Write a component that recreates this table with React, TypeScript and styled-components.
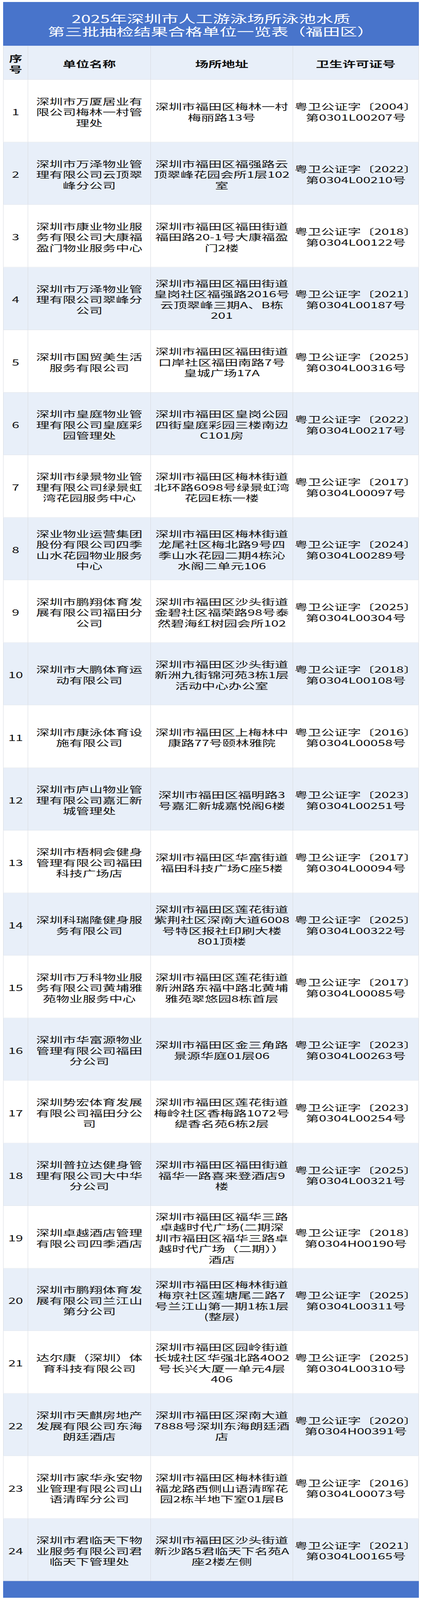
import React, { useEffect, useState } from "react";
import styled, { createGlobalStyle } from "styled-components";

const PAGE_W = 1080;
const PAGE_H = 6423;

const GlobalStyle = createGlobalStyle`
  html, body {
    margin: 0;
    padding: 0;
    background: #ffffff;
  }
  body {
    font-family: "Noto Sans CJK SC", "Noto Sans", "Liberation Sans", sans-serif;
    color: #111111;
  }
  * { box-sizing: border-box; }
`;

const BLUE = "#4874cb";
const LIGHT = "#e8eff9";
const LINE = "#d8dbe0";

type RowData = {
  name: string[];
  addr: string[];
  year: string;
  no: string;
};

const rows: RowData[] = [
  { name: ["深圳市万厦居业有", "限公司梅林一村管", "理处"], addr: ["深圳市福田区梅林一村", "梅丽路13号"], year: "2004", no: "第0301L00207号" },
  { name: ["深圳市万泽物业管", "理有限公司云顶翠", "峰分公司"], addr: ["深圳市福田区福强路云", "顶翠峰花园会所1层102", "室"], year: "2022", no: "第0304L00210号" },
  { name: ["深圳市康业物业服", "务有限公司大康福", "盈门物业服务中心"], addr: ["深圳市福田区福田街道", "福田路20-1号大康福盈", "门2楼"], year: "2018", no: "第0304L00122号" },
  { name: ["深圳市万泽物业管", "理有限公司翠峰分", "公司"], addr: ["深圳市福田区福田街道", "皇岗社区福强路2016号", "云顶翠峰三期A、B栋", "201"], year: "2021", no: "第0304L00187号" },
  { name: ["深圳市国贸美生活", "服务有限公司"], addr: ["深圳市福田区福田街道", "口岸社区福田南路7号", "皇城广场17A"], year: "2025", no: "第0304L00316号" },
  { name: ["深圳市皇庭物业管", "理有限公司皇庭彩", "园管理处"], addr: ["深圳市福田区皇岗公园", "四街皇庭彩园三楼南边", "C101房"], year: "2022", no: "第0304L00217号" },
  { name: ["深圳市绿景物业管", "理有限公司绿景虹", "湾花园服务中心"], addr: ["深圳市福田区梅林街道", "北环路6098号绿景虹湾", "花园E栋一楼"], year: "2017", no: "第0304L00097号" },
  { name: ["深业物业运营集团", "股份有限公司四季", "山水花园物业服务", "中心"], addr: ["深圳市福田区梅林街道", "龙尾社区梅北路9号四", "季山水花园二期4栋沁", "水阁二单元106"], year: "2024", no: "第0304L00289号" },
  { name: ["深圳市鹏翔体育发", "展有限公司福田分", "公司"], addr: ["深圳市福田区沙头街道", "金碧社区福荣路98号泰", "然碧海红树园会所102"], year: "2025", no: "第0304L00304号" },
  { name: ["深圳市大鹏体育运", "动有限公司"], addr: ["深圳市福田区沙头街道", "新洲九街锦河苑3栋1层", "活动中心办公室"], year: "2018", no: "第0304L00108号" },
  { name: ["深圳市康泳体育设", "施有限公司"], addr: ["深圳市福田区上梅林中", "康路77号颐林雅院"], year: "2016", no: "第0304L00058号" },
  { name: ["深圳市庐山物业管", "理有限公司嘉汇新", "城管理处"], addr: ["深圳市福田区福明路3", "号嘉汇新城嘉悦阁6楼"], year: "2023", no: "第0304L00251号" },
  { name: ["深圳市梧桐会健身", "管理有限公司福田", "科技广场店"], addr: ["深圳市福田区华富街道", "福田科技广场C座5楼"], year: "2017", no: "第0304L00094号" },
  { name: ["深圳科瑞隆健身服", "务有限公司"], addr: ["深圳市福田区莲花街道", "紫荆社区深南大道6008", "号特区报社印刷大楼", "801顶楼"], year: "2025", no: "第0304L00322号" },
  { name: ["深圳市万科物业服", "务有限公司黄埔雅", "苑物业服务中心"], addr: ["深圳市福田区莲花街道", "新洲路东福中路北黄埔", "雅苑翠悠园8栋首层"], year: "2017", no: "第0304L00085号" },
  { name: ["深圳市华富源物业", "管理有限公司福田", "分公司"], addr: ["深圳市福田区金三角路", "景源华庭01层06"], year: "2023", no: "第0304L00263号" },
  { name: ["深圳势宏体育发展", "有限公司福田分公", "司"], addr: ["深圳市福田区莲花街道", "梅岭社区香梅路1072号", "缇香名苑6栋2层"], year: "2023", no: "第0304L00254号" },
  { name: ["深圳普拉达健身管", "理有限公司大中华", "分公司"], addr: ["深圳市福田区福田街道", "福华一路喜来登酒店9", "楼"], year: "2025", no: "第0304L00321号" },
  { name: ["深圳卓越酒店管理", "有限公司四季酒店"], addr: ["深圳市福田区福华三路", "卓越时代广场(二期深", "圳市福田区福华三路卓", "越时代广场（二期））", "酒店"], year: "2018", no: "第0304H00190号" },
  { name: ["深圳市鹏翔体育发", "展有限公司兰江山", "第分公司"], addr: ["深圳市福田区梅林街道", "梅京社区莲塘尾二路7", "号兰江山第一期1栋1层", "(整层)"], year: "2025", no: "第0304L00311号" },
  { name: ["达尔康（深圳）体", "育科技有限公司"], addr: ["深圳市福田区园岭街道", "长城社区华强北路4002", "号长兴大厦一单元4层", "406"], year: "2025", no: "第0304L00310号" },
  { name: ["深圳市天麒房地产", "发展有限公司东海", "朗廷酒店"], addr: ["深圳市福田区深南大道", "7888号深圳东海朗廷酒", "店"], year: "2020", no: "第0304H00391号" },
  { name: ["深圳市家华永安物", "业管理有限公司山", "语清晖分公司"], addr: ["深圳市福田区梅林街道", "福龙路西侧山语清晖花", "园2栋半地下室01层B"], year: "2016", no: "第0304L00073号" },
  { name: ["深圳市君临天下物", "业服务有限公司君", "临天下管理处"], addr: ["深圳市福田区沙头街道", "新沙路5君临天下名苑A", "座2楼左侧"], year: "2021", no: "第0304L00165号" },
];

/* Outer frame: takes the height the browser window really offers */
const Frame = styled.div`
  width: ${PAGE_W}px;
  overflow: hidden;
`;

/* The page as designed for a 1080×6423 window, with the 8px page margin */
const Page = styled.div`
  width: ${PAGE_W}px;
  height: ${PAGE_H}px;
  padding: 8px;
  transform-origin: 0 0;
`;

const Sheet = styled.div`
  width: 1064px;
  display: flex;
  flex-direction: column;
`;

const TitleBar = styled.header`
  height: 176px;
  background: ${BLUE};
  color: #ffffff;
  display: flex;
  flex-direction: column;
  align-items: center;
  justify-content: center;
  padding-top: 8px;
  font-size: 44px;
  line-height: 52px;
  font-weight: 400;
  white-space: nowrap;
`;

const Row = styled.div<{ $shade: boolean; $h: number }>`
  display: grid;
  grid-template-columns: 64px 314px 364px 322px;
  height: ${(p) => p.$h}px;
  background: ${(p) => (p.$shade ? LIGHT : "#ffffff")};
  border-bottom: 1px solid ${LINE};
  &:last-of-type {
    border-bottom-color: #aab4c6;
  }
`;

const Cell = styled.div<{ $bold?: boolean }>`
  display: flex;
  flex-direction: column;
  align-items: center;
  justify-content: center;
  text-align: center;
  border-right: 1px solid ${LINE};
  font-size: 34px;
  line-height: 43px;
  font-weight: ${(p) => (p.$bold ? 700 : 400)};
  color: #111111;
  white-space: nowrap;
  padding-top: 6px;
  &:first-child {
    border-left: 1px solid ${LINE};
  }
`;

const Line = styled.span`
  display: block;
`;

const Footer = styled.footer`
  height: 67px;
  background: ${BLUE};
`;

const Lines = ({ items }: { items: string[] }) => (
  <>
    {items.map((t, i) => (
      <Line key={i}>{t}</Line>
    ))}
  </>
);

const fitScale = () =>
  typeof window === "undefined" ? 1 : Math.min(1, window.innerHeight / PAGE_H);

export default function App() {
  const [scale, setScale] = useState<number>(fitScale);

  useEffect(() => {
    const onResize = () => setScale(fitScale());
    onResize();
    window.addEventListener("resize", onResize);
    return () => window.removeEventListener("resize", onResize);
  }, []);

  return (
    <>
      <GlobalStyle />
      <Frame style={{ height: PAGE_H * scale }}>
        <Page style={{ transform: `scaleY(${scale})` }}>
          <Sheet>
            <TitleBar>
              <Line>2025年深圳市人工游泳场所泳池水质</Line>
              <Line>第三批抽检结果合格单位一览表（福田区）</Line>
            </TitleBar>
            <Row $shade={true} $h={136}>
              <Cell $bold>
                <Lines items={["序", "号"]} />
              </Cell>
              <Cell $bold>单位名称</Cell>
              <Cell $bold>场所地址</Cell>
              <Cell $bold>卫生许可证号</Cell>
            </Row>
            {rows.map((r, i) => (
              <Row key={i} $shade={i % 2 === 1} $h={251.15}>
                <Cell>{i + 1}</Cell>
                <Cell>
                  <Lines items={r.name} />
                </Cell>
                <Cell>
                  <Lines items={r.addr} />
                </Cell>
                <Cell>
                  <Lines items={[`粤卫公证字〔${r.year}〕`, r.no]} />
                </Cell>
              </Row>
            ))}
            <Footer />
          </Sheet>
        </Page>
      </Frame>
    </>
  );
}
